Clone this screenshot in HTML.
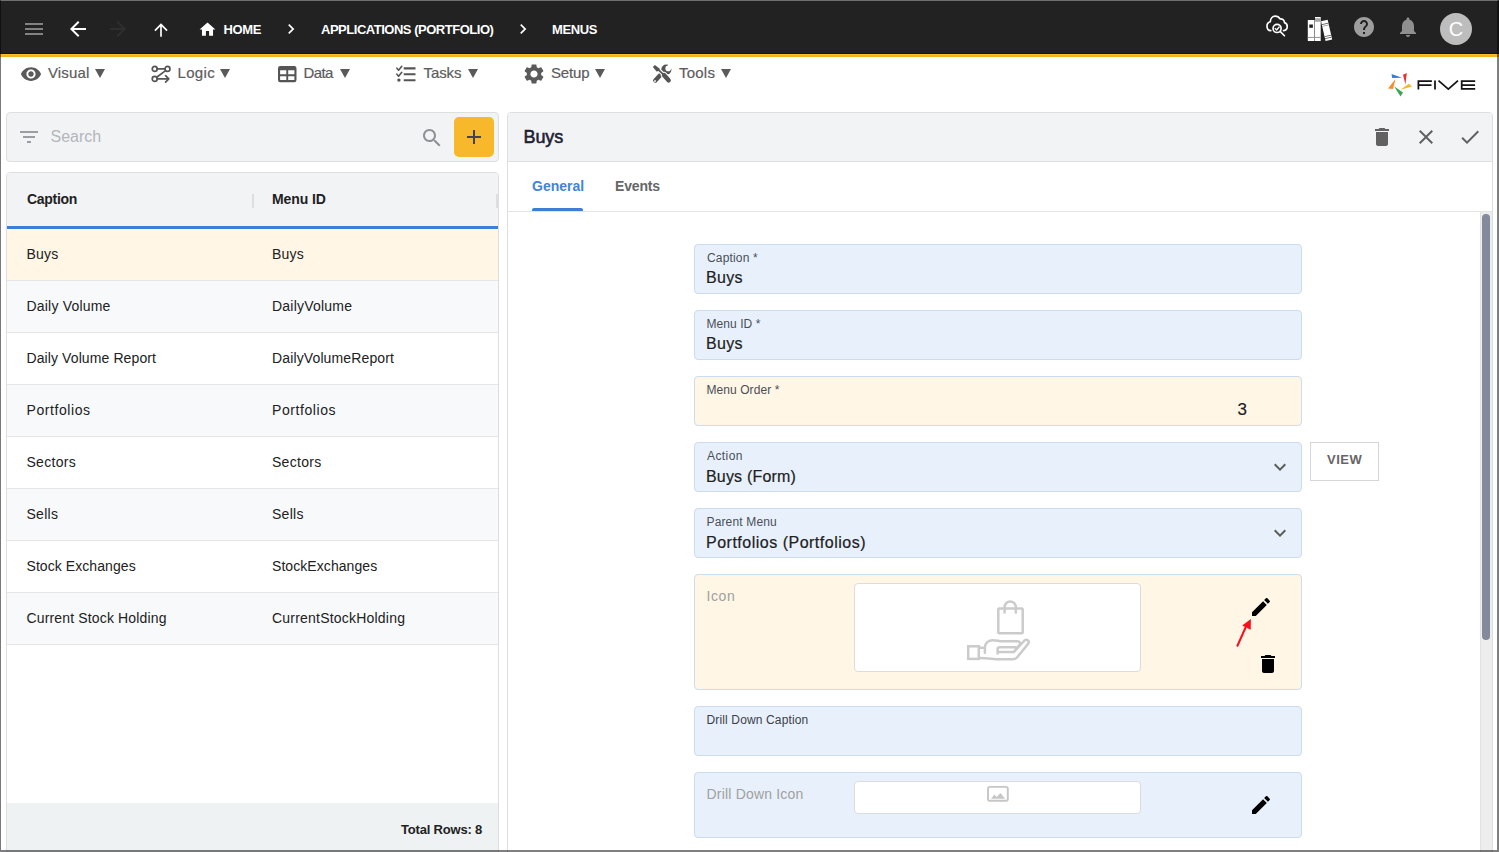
<!DOCTYPE html>
<html>
<head>
<meta charset="utf-8">
<style>
*{box-sizing:border-box;margin:0;padding:0}
html,body{width:1499px;height:852px;overflow:hidden;background:#fff;font-family:"Liberation Sans",sans-serif;color:#212121}
.abs{position:absolute}
#topbar{position:absolute;left:0;top:0;width:1499px;height:54px;background:#222;border-bottom:1px solid #11151f}
#orange{position:absolute;left:0;top:54px;width:1499px;height:3px;background:linear-gradient(#ffc230,#f6b424 50%,#f4b01e)}
.tb{position:absolute;color:#fff;font-weight:bold;font-size:13px;white-space:nowrap;line-height:16px;top:21px}
.mi{position:absolute;top:64px;font-size:15px;color:#5c5c5c;-webkit-text-stroke:.2px #5c5c5c;white-space:nowrap;line-height:18px}
.tri{position:absolute;width:0;height:0;border-left:5px solid transparent;border-right:5px solid transparent;border-top:9px solid #5a5a5a;top:69.300px}
svg{position:absolute;overflow:visible}
/* left */
#search{position:absolute;left:6px;top:112px;width:493px;height:50px;background:#f2f3f5;border:1px solid #dcdee0;border-radius:4px}
#plus{position:absolute;left:454px;top:117px;width:40px;height:40px;background:#f7b82c;border-radius:5px}
#table{position:absolute;left:6px;top:172px;width:493px;height:690px;background:#fff;border:1px solid #dcdee0;border-radius:4px 4px 0 0;overflow:hidden}
#thead{position:absolute;left:0;top:0;width:491px;height:53px;background:#f2f3f5}
#thline{position:absolute;left:0;top:53px;width:491px;height:3px;background:#3d7fd6}
.row{position:absolute;left:0;width:491px;height:52px;background:#fff;border-bottom:1px solid #e4e6e8;font-size:14px;line-height:18px}
.row.g{background:#f8f9fb}
.row span{position:absolute;top:17px;white-space:nowrap;color:#212121}
.row .c1{left:20px}.row .c2{left:265px}
.row.sel{background:#fff6e5}
#tfoot{position:absolute;left:0;top:630px;width:491px;height:60px;background:#eef2f3}
/* right */
#panel{position:absolute;left:507px;top:112px;width:986px;height:760px;border:1px solid #dcdee0;border-radius:4px 4px 0 0;background:#fff;overflow:hidden}
#phead{position:absolute;left:0;top:0;width:984px;height:49px;background:#f2f3f5;border-bottom:1px solid #dcdee0}
#tabsline{position:absolute;left:0;top:98px;width:984px;height:1px;background:#e4e4e4}
.fld{position:absolute;left:694px;width:608px;height:50px;background:#e8f1fb;border:1px solid #cbdcec;border-radius:4px}
.fld.y{background:#fff6e5}
.lbl{position:absolute;left:12px;top:6px;font-size:12px;line-height:14px;color:#4a4f57;white-space:nowrap}
.val{position:absolute;left:12px;top:22px;font-size:16px;line-height:20px;color:#212121;white-space:nowrap;-webkit-text-stroke:.2px #212121}
.biglbl{position:absolute;left:12px;font-size:14px;line-height:18px;color:#a0a0a0;white-space:nowrap}
.imgbox{position:absolute;background:#fff;border:1px solid #dcdcdc;border-radius:4px}
#frame{position:absolute;left:0;top:0;width:1499px;height:852px;border-style:solid;border-color:#707070 rgba(0,0,0,.5) rgba(0,0,0,.5) rgba(0,0,0,.52);border-width:1px 2px 2px 1px;pointer-events:none;z-index:50}
/*FIT-START*/
#h_cap{letter-spacing:-0.30px;margin-left:0.0px;margin-top:-1.0px}
#h_mid{letter-spacing:-0.11px;margin-left:0.0px;margin-top:-1.0px}
#l_act{letter-spacing:0.41px;margin-left:0.0px;margin-top:0.0px}
#l_cap{letter-spacing:0.16px;margin-left:0.0px;margin-top:0.0px}
#l_ddc{letter-spacing:0.14px;margin-left:-0.5px;margin-top:0.0px}
#l_ddi{letter-spacing:0.19px;margin-left:-0.5px;margin-top:-1.0px}
#l_icon{letter-spacing:0.60px;margin-left:-0.5px;margin-top:-1.0px}
#l_mid{letter-spacing:0.06px;margin-left:-0.5px;margin-top:0.0px}
#l_ord{letter-spacing:0.07px;margin-left:-0.5px;margin-top:0.0px}
#l_par{letter-spacing:0.15px;margin-left:-0.5px;margin-top:0.0px}
#m_data{letter-spacing:-0.58px;margin-left:0.0px;margin-top:0.0px}
#m_logic{letter-spacing:0.34px;margin-left:-1.0px;margin-top:0.0px}
#m_setup{letter-spacing:-0.17px;margin-left:0.0px;margin-top:0.0px}
#m_tasks{letter-spacing:-0.08px;margin-left:0.0px;margin-top:0.0px}
#m_tools{letter-spacing:0.22px;margin-left:0.5px;margin-top:0.0px}
#m_visual{letter-spacing:0.14px;margin-left:0.0px;margin-top:0.0px}
#p_title{letter-spacing:-0.10px;margin-left:-0.5px;margin-top:0.0px}
#r0a{letter-spacing:0.23px;margin-left:-0.5px;margin-top:-1.0px}
#r0b{letter-spacing:0.20px;margin-left:0.0px;margin-top:-1.0px}
#r1a{letter-spacing:0.19px;margin-left:-0.5px;margin-top:-1.0px}
#r1b{letter-spacing:0.22px;margin-left:0.0px;margin-top:-1.0px}
#r2a{letter-spacing:0.10px;margin-left:-0.5px;margin-top:-1.0px}
#r2b{letter-spacing:0.13px;margin-left:0.0px;margin-top:-1.0px}
#r3a{letter-spacing:0.58px;margin-left:-0.5px;margin-top:-1.0px}
#r3b{letter-spacing:0.58px;margin-left:0.0px;margin-top:-1.0px}
#r4a{letter-spacing:0.28px;margin-left:-0.5px;margin-top:-1.0px}
#r4b{letter-spacing:0.28px;margin-left:0.0px;margin-top:-1.0px}
#r5a{letter-spacing:0.28px;margin-left:-0.5px;margin-top:-1.0px}
#r5b{letter-spacing:0.28px;margin-left:0.0px;margin-top:-1.0px}
#r6a{letter-spacing:0.07px;margin-left:-0.5px;margin-top:-1.0px}
#r6b{letter-spacing:0.07px;margin-left:0.0px;margin-top:-1.0px}
#r7a{letter-spacing:0.15px;margin-left:-0.5px;margin-top:-1.0px}
#r7b{letter-spacing:0.21px;margin-left:0.0px;margin-top:-1.0px}
#t_app{letter-spacing:-0.48px;margin-left:0.0px;margin-top:1.0px}
#t_home{letter-spacing:-0.32px;margin-left:-0.5px;margin-top:1.0px}
#t_menus{letter-spacing:-0.40px;margin-left:-1.0px;margin-top:1.0px}
#t_search{letter-spacing:0.00px;margin-left:-0.5px;margin-top:0.0px}
#t_total{letter-spacing:-0.19px;margin-left:1.0px;margin-top:1.0px}
#t_view{letter-spacing:0.53px;margin-left:0.0px;margin-top:0.0px}
#tab_ev{letter-spacing:-0.16px;margin-left:0.0px;margin-top:0.0px}
#tab_gen{letter-spacing:0.00px;margin-left:0.0px;margin-top:0.0px}
#v_act{letter-spacing:0.18px;margin-left:-1.0px;margin-top:2.0px}
#v_cap{letter-spacing:0.28px;margin-left:-1.0px;margin-top:1.0px}
#v_mid{letter-spacing:0.28px;margin-left:-1.0px;margin-top:1.0px}
#v_ord{letter-spacing:0.00px;margin-left:-0.5px;margin-top:1.0px}
#v_par{letter-spacing:0.50px;margin-left:-1.0px;margin-top:2.0px}
/*FIT-END*/
</style>
</head>
<body>
<div id="topbar"></div>
<div id="orange"></div>


<!-- hamburger -->
<div class="abs" style="left:25px;top:23px;width:18px;height:2px;background:#828282"></div>
<div class="abs" style="left:25px;top:28px;width:18px;height:2px;background:#828282"></div>
<div class="abs" style="left:25px;top:33px;width:18px;height:2px;background:#828282"></div>
<!-- back -->
<svg style="left:66px;top:17px" width="24" height="24" viewBox="0 0 24 24"><path fill="#fff" d="M20 11H7.83l5.59-5.59L12 4l-8 8 8 8 1.41-1.41L7.83 13H20v-2z"/></svg>
<!-- forward disabled -->
<svg style="left:106px;top:17px" width="24" height="24" viewBox="0 0 24 24"><path fill="#2e2e2e" d="M12 4l-1.41 1.41L16.17 11H4v2h12.17l-5.58 5.59L12 20l8-8z"/></svg>
<!-- up -->
<svg style="left:151px;top:19.5px" width="20" height="20" viewBox="0 0 24 24"><path fill="#fff" d="M4 12l1.41 1.41L11 7.83V20h2V7.83l5.58 5.59L20 12l-8-8-8 8z"/></svg>
<!-- home -->
<svg style="left:198px;top:20px" width="19" height="19" viewBox="0 0 24 24"><path fill="#fff" d="M10 20v-6h4v6h5v-8h3L12 3 2 12h3v8z"/></svg>
<div class="tb" id="t_home" style="left:224px">HOME</div>
<svg style="left:281px;top:19px" width="20" height="20" viewBox="0 0 24 24"><path fill="#fff" d="M10 6L8.59 7.41 13.17 12l-4.58 4.59L10 18l6-6z"/></svg>
<div class="tb" id="t_app" style="left:321px">APPLICATIONS (PORTFOLIO)</div>
<svg style="left:513px;top:19px" width="20" height="20" viewBox="0 0 24 24"><path fill="#fff" d="M10 6L8.59 7.41 13.17 12l-4.58 4.59L10 18l6-6z"/></svg>
<div class="tb" id="t_menus" style="left:553px">MENUS</div>
<!-- cloud -->
<svg style="left:1264.900px;top:14.300px" width="24.400" height="24.400" viewBox="0 0 26 26" fill="none" stroke="#fff" stroke-width="1.800" stroke-linecap="round" stroke-linejoin="round">
<path d="M6.200 17.800C3.500 17.600 2.100 15.400 2.100 13C2.100 10.600 3.600 8.800 5.600 8.300C5.800 5 8 2.200 10.800 2.200C13.200 2.200 15 3.500 16 5.200C18.500 4.800 20.600 6.600 20.800 9.200C22.600 9.800 23.700 11.300 23.700 13.200C23.700 15.500 22.200 17.400 19.800 17.800"/>
<circle cx="12.900" cy="15.400" r="4.300"/><path d="M16.100 18.600l4.600 4.600"/><path d="M10.900 15.500l1.500 1.600 2.700-3.200" stroke-width="1.400"/></svg>
<!-- books -->
<svg style="left:1307px;top:16px" width="27" height="27" viewBox="0 0 27 27">
<rect x="0.800" y="4" width="6.600" height="21" fill="#fff"/><rect x="2.300" y="8.500" width="3.600" height="3.300" fill="#222"/><rect x="0.800" y="20.900" width="6.600" height="1.100" fill="#9c9c9c"/>
<rect x="8" y="1" width="5.700" height="24" fill="#fff"/><rect x="8" y="2.200" width="5.700" height="3.600" fill="#a9a9a9"/><rect x="8" y="20.900" width="5.700" height="1.100" fill="#9c9c9c"/><rect x="7.400" y="4" width="0.600" height="21" fill="#999"/>
<g transform="rotate(-13 19.600 14.400)"><rect x="16.200" y="4.300" width="6.800" height="20.300" fill="#fff"/><rect x="16.200" y="7.300" width="6.800" height="0.900" fill="#555"/><rect x="16.200" y="9.100" width="6.800" height="0.700" fill="#999"/><rect x="16.200" y="19.600" width="6.800" height="0.900" fill="#555"/><rect x="16.200" y="21.600" width="6.800" height="0.900" fill="#555"/></g></svg>
<!-- help -->
<svg style="left:1352px;top:14.7px" width="24" height="24" viewBox="0 0 24 24"><path fill="#9e9e9e" d="M12 2C6.48 2 2 6.48 2 12s4.48 10 10 10 10-4.48 10-10S17.52 2 12 2zm1 17h-2v-2h2v2zm2.07-7.75l-.9.92C13.45 12.9 13 13.5 13 15h-2v-.5c0-1.1.45-2.1 1.17-2.83l1.24-1.26c.37-.36.59-.86.59-1.41 0-1.1-.9-2-2-2s-2 .9-2 2H8c0-2.21 1.79-4 4-4s4 1.79 4 4c0 .88-.36 1.68-.93 2.25z"/></svg>
<!-- bell -->
<svg style="left:1396px;top:14.7px" width="24" height="24" viewBox="0 0 24 24"><path fill="#8f8f8f" d="M12 22c1.1 0 2-.9 2-2h-4c0 1.1.89 2 2 2zm6-6v-5c0-3.07-1.64-5.64-4.5-6.32V4c0-.83-.67-1.5-1.5-1.5s-1.5.67-1.5 1.5v.68C7.63 5.36 6 7.92 6 11v5l-2 2v1h16v-1l-2-2z"/></svg>
<!-- avatar -->
<div class="abs" style="left:1440px;top:13px;width:32px;height:32px;border-radius:50%;background:#bdbdbd;color:#fff;font-size:20px;line-height:32px;text-align:center">C</div>



<!-- Visual -->
<svg style="left:19.8px;top:62.6px" width="22" height="22" viewBox="0 0 24 24"><path fill="#5a5a5a" d="M12 4.5C7 4.5 2.73 7.61 1 12c1.73 4.39 6 7.5 11 7.5s9.27-3.11 11-7.5c-1.73-4.39-6-7.5-11-7.5zM12 17c-2.76 0-5-2.24-5-5s2.24-5 5-5 5 2.24 5 5-2.24 5-5 5zm0-8c-1.66 0-3 1.34-3 3s1.34 3 3 3 3-1.34 3-3-1.34-3-3-3z"/></svg>
<div class="mi" id="m_visual" style="left:48px">Visual</div><div class="tri" style="left:95px"></div>
<!-- Logic -->
<svg style="left:151px;top:64px" width="20" height="20" viewBox="0 0 20 20" fill="none" stroke="#555" stroke-width="1.700" stroke-linecap="round" stroke-linejoin="round">
<circle cx="3.700" cy="4.900" r="2.450"/><circle cx="16.500" cy="4.900" r="2.450"/><circle cx="3.700" cy="14.900" r="2.450"/>
<path d="M6.200 4.900H14M14.600 6.600L5.700 13.200M6.200 14.900H17.600M14.600 11.700l3.200 3.200-3.200 3.200"/></svg>
<div class="mi" id="m_logic" style="left:178.5px">Logic</div><div class="tri" style="left:220.3px"></div>
<!-- Data -->
<svg style="left:277.800px;top:65.800px" width="18.500" height="16.200" viewBox="0 0 18.500 16.200"><path fill="#555" fill-rule="evenodd" d="M2.200 0h14.100a2.200 2.200 0 0 1 2.200 2.200v11.800a2.200 2.200 0 0 1-2.200 2.200h-14.100a2.200 2.200 0 0 1-2.200-2.200v-11.800a2.200 2.200 0 0 1 2.200-2.200zM2.100 4.300v3.900h6.200v-3.900zM10.200 4.300v3.900h6.200v-3.900zM2.100 10.200v3.900h6.200v-3.900zM10.200 10.200v3.900h6.200v-3.900z"/></svg>
<div class="mi" id="m_data" style="left:303.5px">Data</div><div class="tri" style="left:340px"></div>
<!-- Tasks -->
<svg style="left:396px;top:65px" width="20" height="18" viewBox="0 0 20 18" fill="none" stroke="#555">
<path stroke-width="2.200" d="M7.700 3.350h11.800M7.700 9.250h11.800M7.700 15.250h11.800"/>
<path stroke-width="1.600" stroke-linecap="round" stroke-linejoin="round" d="M0.900 3.200l1.700 2 3.200-3.900M0.900 9.200l1.700 2 3.200-3.900"/><circle cx="2.900" cy="15.100" r="1.700" fill="#555" stroke="none"/></svg>
<div class="mi" id="m_tasks" style="left:423.5px">Tasks</div><div class="tri" style="left:467.5px"></div>
<!-- Setup -->
<svg style="left:521.5px;top:62px" width="24" height="24" viewBox="0 0 24 24"><path fill="#5a5a5a" d="M19.140 12.940c.040-.300.060-.610.060-.940 0-.320-.020-.640-.070-.940l2.030-1.580c.180-.140.230-.410.120-.610l-1.920-3.320c-.120-.220-.370-.290-.590-.220l-2.390.960c-.500-.380-1.030-.700-1.620-.940l-.360-2.540c-.040-.240-.240-.410-.480-.410h-3.840c-.240 0-.430.170-.470.410l-.360 2.540c-.590.240-1.130.570-1.620.940l-2.390-.960c-.220-.080-.470 0-.590.220L2.740 8.870c-.120.210-.080.470.120.610l2.030 1.580c-.050.300-.090.630-.090.940s.020.640.070.940l-2.030 1.580c-.180.140-.230.410-.120.610l1.920 3.320c.120.220.370.290.590.220l2.390-.96c.500.380 1.030.700 1.620.940l.360 2.540c.050.240.240.410.480.410h3.840c.240 0 .440-.170.470-.410l.360-2.540c.590-.240 1.130-.560 1.620-.940l2.390.960c.220.080.470 0 .590-.220l1.920-3.320c.120-.220.070-.470-.120-.610l-2.010-1.580zM12 15.600c-1.980 0-3.600-1.620-3.600-3.600s1.620-3.600 3.600-3.600 3.600 1.620 3.600 3.600-1.620 3.600-3.600 3.600z"/></svg>
<div class="mi" id="m_setup" style="left:551px">Setup</div><div class="tri" style="left:595px"></div>
<!-- Tools -->
<svg style="left:652px;top:64px" width="20" height="20" viewBox="0 0 20 20">
<circle cx="14.300" cy="5.700" r="5.100" fill="#555"/>
<circle cx="16.200" cy="4.400" r="2.800" fill="#fff"/><rect x="15.900" y="-1" width="6" height="5.300" fill="#fff"/>
<path stroke="#555" stroke-width="4.400" stroke-linecap="round" fill="none" d="M9.800 9.400L3.300 16.500"/>
<rect x="2.200" y="16.200" width="1.700" height="1.700" fill="#f4f4f4"/>
<path stroke="#fff" stroke-width="4" fill="none" d="M5 4.600L11.800 10.800"/>
<path stroke="#fff" stroke-width="6.400" stroke-linecap="round" fill="none" d="M12.100 11.200L16.600 16.300"/>
<path fill="#555" d="M0.900 3.100L2.900 0.900 7.500 4.400 7.700 6.300 5.900 7.300 4.500 7.500z"/>
<path stroke="#555" stroke-width="1.700" fill="none" d="M6.500 5.800L11.500 10.700"/>
<path stroke="#555" stroke-width="4.500" stroke-linecap="round" fill="none" d="M12.100 11.200L16.600 16.300"/>
</svg>
<div class="mi" id="m_tools" style="left:678.5px">Tools</div><div class="tri" style="left:721px"></div>
<!-- FIVE logo -->
<svg style="left:1386px;top:71px" width="94" height="28" viewBox="0 0 94 28">
<path fill="#2f7de0" d="M5.500 2.900L16 6.800 6.200 7.100z"/><path fill="#e0343a" d="M20.800 2L17 3.800 19.400 13.500z"/>
<path fill="#f6b826" d="M22.800 12.800L26 15.500 14.500 18.800z"/><path fill="#3aa655" d="M8 15.200L17 21.500 14.500 25.400z"/>
<path fill="#fb8a2a" d="M9.500 8.100L7 17.900 2 17.500z"/>
<g fill="none" stroke="#141414" stroke-width="1.750"><path d="M32.400 18.600V10.200H45.900M32.400 14.100H45.500"/><path d="M49 9.400V18.600"/><path d="M52.500 9.700l9.800 8.500L72 9.700"/><path d="M89.200 10.200H75.700V17.800H89.200M75.700 14.100H89"/></g></svg>



<div id="search"></div>
<svg style="left:17px;top:125px" width="24" height="24" viewBox="0 0 24 24"><path fill="#9a9ea3" d="M10 18h4v-2h-4v2zM3 6v2h18V6H3zm3 7h12v-2H6v2z"/></svg>
<div class="abs" id="t_search" style="left:51px;top:127px;font-size:16px;line-height:20px;color:#b3b6ba;white-space:nowrap">Search</div>
<svg style="left:419.500px;top:125.500px" width="24" height="24" viewBox="0 0 24 24"><path fill="#8d9196" d="M15.500 14h-.790l-.280-.270C15.410 12.590 16 11.110 16 9.500 16 5.910 13.090 3 9.500 3S3 5.910 3 9.500 5.910 16 9.500 16c1.610 0 3.090-.590 4.230-1.570l.270.280v.790l5 4.990L20.490 19l-4.990-5zm-6 0C7.010 14 5 11.990 5 9.500S7.010 5 9.500 5 14 7.010 14 9.500 11.990 14 9.500 14z"/></svg>
<div id="plus"></div>
<div class="abs" style="left:467px;top:136px;width:14px;height:2px;background:#3f4556"></div>
<div class="abs" style="left:473px;top:130px;width:2px;height:14px;background:#3f4556"></div>
<div id="table">
<div id="thead"></div>
<div class="abs" id="h_cap" style="left:20px;top:18px;font-size:14px;font-weight:bold;line-height:18px;white-space:nowrap">Caption</div>
<div class="abs" style="left:245px;top:21px;width:2px;height:14px;background:#dcdee0"></div>
<div class="abs" id="h_mid" style="left:265px;top:18px;font-size:14px;font-weight:bold;line-height:18px;white-space:nowrap">Menu ID</div>
<div class="abs" style="left:489px;top:21px;width:2px;height:14px;background:#dcdee0"></div>
<div id="thline"></div>
<div class="row sel" style="top:56px"><span class="c1" id="r0a">Buys</span><span class="c2" id="r0b">Buys</span></div>
<div class="row g" style="top:108px"><span class="c1" id="r1a">Daily Volume</span><span class="c2" id="r1b">DailyVolume</span></div>
<div class="row" style="top:160px"><span class="c1" id="r2a">Daily Volume Report</span><span class="c2" id="r2b">DailyVolumeReport</span></div>
<div class="row g" style="top:212px"><span class="c1" id="r3a">Portfolios</span><span class="c2" id="r3b">Portfolios</span></div>
<div class="row" style="top:264px"><span class="c1" id="r4a">Sectors</span><span class="c2" id="r4b">Sectors</span></div>
<div class="row g" style="top:316px"><span class="c1" id="r5a">Sells</span><span class="c2" id="r5b">Sells</span></div>
<div class="row" style="top:368px"><span class="c1" id="r6a">Stock Exchanges</span><span class="c2" id="r6b">StockExchanges</span></div>
<div class="row g" style="top:420px"><span class="c1" id="r7a">Current Stock Holding</span><span class="c2" id="r7b">CurrentStockHolding</span></div>

<div id="tfoot"></div>
<div class="abs" id="t_total" style="left:393px;top:648px;font-size:13px;font-weight:bold;line-height:16px;white-space:nowrap">Total Rows: 8</div>
</div>



<div id="panel">
<div id="phead"></div>
<div id="tabsline"></div>
</div>
<div class="abs" id="p_title" style="left:524px;top:126px;font-size:18px;-webkit-text-stroke:.55px #1a2033;line-height:22px;white-space:nowrap;color:#1f2430">Buys</div>
<svg style="left:1370px;top:125px" width="24" height="24" viewBox="0 0 24 24"><path fill="#616161" d="M6 19c0 1.100.900 2 2 2h8c1.100 0 2-.900 2-2V7H6v12zM19 4h-3.500l-1-1h-5l-1 1H5v2h14V4z"/></svg>
<svg style="left:1414px;top:125px" width="24" height="24" viewBox="0 0 24 24"><path fill="#616161" d="M19 6.410L17.590 5 12 10.590 6.410 5 5 6.410 10.590 12 5 17.590 6.410 19 12 13.410 17.590 19 19 17.590 13.410 12z"/></svg>
<svg style="left:1458px;top:125px" width="24" height="24" viewBox="0 0 24 24"><path fill="#616161" d="M9 16.170L4.830 12l-1.420 1.410L9 19 21 7l-1.410-1.410z"/></svg>
<div class="abs" id="tab_gen" style="left:532px;top:177px;font-size:14px;font-weight:bold;line-height:18px;white-space:nowrap;color:#4184d9">General</div>
<div class="abs" style="left:532px;top:208px;width:51px;height:3px;background:#3d7fd6;border-radius:2px 2px 0 0"></div>
<div class="abs" id="tab_ev" style="left:615px;top:177px;font-size:14px;font-weight:bold;line-height:18px;white-space:nowrap;color:#666">Events</div>
<!-- scrollbar -->
<div class="abs" style="left:1480px;top:212px;width:12px;height:640px;background:#ededed;border-left:1px solid #e2e2e2"></div>
<div class="abs" style="left:1482px;top:214px;width:8px;height:426px;background:#838a9c;border-radius:4px"></div>

<div class="fld" style="top:244px"><div class="lbl" id="l_cap">Caption *</div><div class="val" id="v_cap">Buys</div></div>
<div class="fld" style="top:310px"><div class="lbl" id="l_mid">Menu ID *</div><div class="val" id="v_mid">Buys</div></div>
<div class="fld y" style="top:376px"><div class="lbl" id="l_ord">Menu Order *</div><div class="val" id="v_ord" style="left:543px;font-size:17px">3</div></div>
<div class="fld" style="top:442px"><div class="lbl" id="l_act">Action</div><div class="val" id="v_act">Buys (Form)</div>
<svg style="left:573px;top:12px" width="24" height="24" viewBox="0 0 24 24"><path fill="#5c5c5c" d="M16.590 8.590L12 13.170 7.410 8.590 6 10l6 6 6-6z"/></svg></div>
<div class="abs" style="left:1310px;top:442px;width:69px;height:39px;border:1px solid #d6d6d6;background:#fff"></div>
<div class="abs" id="t_view" style="left:1327px;top:452px;font-size:13px;font-weight:bold;line-height:16px;color:#666;white-space:nowrap">VIEW</div>
<div class="fld" style="top:508px"><div class="lbl" id="l_par">Parent Menu</div><div class="val" id="v_par">Portfolios (Portfolios)</div>
<svg style="left:573px;top:12px" width="24" height="24" viewBox="0 0 24 24"><path fill="#5c5c5c" d="M16.590 8.590L12 13.170 7.410 8.590 6 10l6 6 6-6z"/></svg></div>

<div class="fld y" style="top:574px;height:116px"><div class="biglbl" id="l_icon" style="top:13px">Icon</div>
<div class="imgbox" style="left:159px;top:8px;width:287px;height:89px"></div>
<!-- hand+bag -->
<svg style="left:265px;top:20px" width="75" height="70" viewBox="0 0 75 70" fill="none" stroke="#cbcbcb" stroke-width="2.500" stroke-linejoin="round" stroke-linecap="round">
<rect x="38.300" y="13.500" width="24.400" height="24.800" rx="1"/><path d="M44.600 17.500V12.300A5.600 5.900 0 0 1 55.800 12.300V17.500"/>
<rect x="8.200" y="51.300" width="10.600" height="12.600" stroke-linejoin="miter"/>
<path d="M20.100 52.800H24.900M24.900 57.800V52.500C24.900 48 28.500 45.200 32.800 45.200C36 45.200 38 46 40.500 46.200H57C60.500 46.200 60.800 49 59 50.500L53.700 57.100H38.800M37.600 58.500V54.500Q37.600 52.300 39.800 52.300H55.500M53.700 57.100L64.500 45.500C66.500 43.500 70 46 68.300 48.600L57 62.500C55.800 63.800 54.500 64.300 52.500 64.300H40C34 64.300 28 62.900 20.100 62.900"/></svg>
<!-- pencil -->
<svg style="left:554px;top:20px" width="24" height="24" viewBox="0 0 24 24"><path fill="#000" d="M3 17.250V21h3.750L17.810 9.940l-3.750-3.750L3 17.250zM20.710 7.040c.390-.390.390-1.020 0-1.410l-2.340-2.340c-.390-.390-1.020-.390-1.410 0l-1.830 1.830 3.750 3.750 1.830-1.830z"/></svg>
<!-- red arrow -->
<svg style="left:535px;top:40px" width="25" height="36" viewBox="0 0 25 36"><path d="M7.100 31.500L15.800 12" stroke="#fb0d1b" stroke-width="2" fill="none"/><path fill="#fb0d1b" d="M20.900 4L12.200 10.600 20.700 14.800z"/></svg>
<!-- trash -->
<svg style="left:561px;top:77px" width="24" height="24" viewBox="0 0 24 24"><path fill="#000" d="M6 19c0 1.100.900 2 2 2h8c1.100 0 2-.900 2-2V7H6v12zM19 4h-3.500l-1-1h-5l-1 1H5v2h14V4z"/></svg>
</div>

<div class="fld" style="top:706px"><div class="lbl" id="l_ddc" style="color:#3c4048">Drill Down Caption</div></div>
<div class="fld" style="top:772px;height:66px"><div class="biglbl" id="l_ddi" style="top:13px">Drill Down Icon</div>
<div class="imgbox" style="left:159px;top:8px;width:287px;height:33px"></div>
<svg style="left:291px;top:13px" width="24" height="18" viewBox="0 0 24 18"><rect x="2" y="0.900" width="19.800" height="13.900" rx="1.800" fill="none" stroke="#c6c6c6" stroke-width="1.900"/><path fill="#c6c6c6" d="M5 12.800L8.400 8.600 10.800 11.100 14.400 6.900 19.100 12.800z"/></svg>
<svg style="left:554px;top:20px" width="24" height="24" viewBox="0 0 24 24"><path fill="#000" d="M3 17.250V21h3.750L17.810 9.940l-3.750-3.750L3 17.250zM20.710 7.040c.390-.390.390-1.020 0-1.410l-2.340-2.340c-.390-.390-1.020-.390-1.410 0l-1.830 1.830 3.750 3.750 1.830-1.830z"/></svg>
</div>


<div id="frame"></div>
</body>
</html>
